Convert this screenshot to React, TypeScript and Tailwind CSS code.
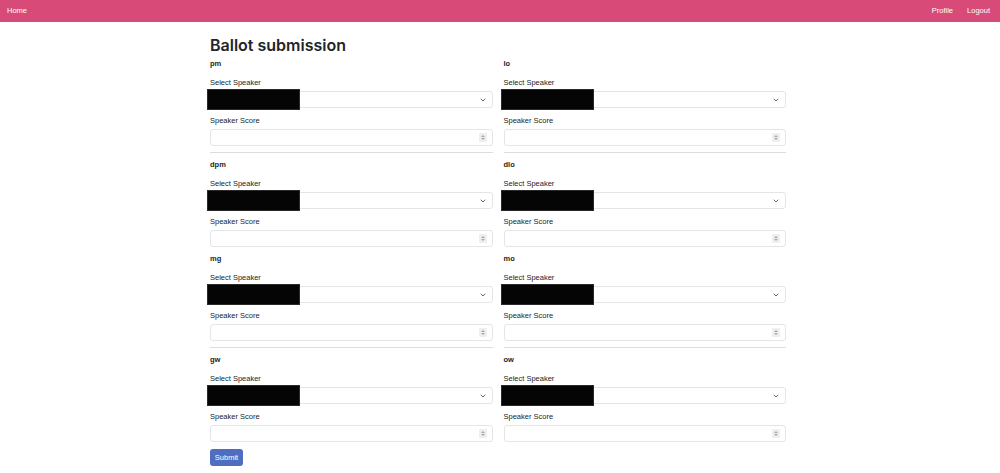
import React from 'react';

const rows: [string, string][] = [
  ['pm', 'lo'],
  ['dpm', 'dlo'],
  ['mg', 'mo'],
  ['gw', 'ow'],
];

// rows followed by a divider line
const divided = ['pm', 'lo', 'mg', 'mo'];

function Chevron() {
  return (
    <svg width="6" height="4" viewBox="0 0 6 4" fill="none">
      <path d="M1 1 3 3 5 1" stroke="#666" strokeWidth="1" strokeLinecap="round" strokeLinejoin="round" />
    </svg>
  );
}

function Spinner() {
  return (
    <div className="flex h-[9px] w-[8px] flex-col items-center justify-center gap-[1px] rounded-[1px] bg-[#efefef]">
      <svg width="4" height="2" viewBox="0 0 4 2">
        <path d="M0 2 2 0 4 2Z" fill="#a8a8a8" />
      </svg>
      <svg width="4" height="2" viewBox="0 0 4 2">
        <path d="M0 0 2 2 4 0Z" fill="#a8a8a8" />
      </svg>
    </div>
  );
}

function SpeakerSection({ position }: { position: string }) {
  const hasDivider = divided.includes(position);
  return (
    <div className="flex flex-col">
      <div className="h-[12px] text-[7.5px] font-bold leading-[12px] text-[#212529]">{position}</div>
      <div className="mt-[7px] h-[12px] text-[7.5px] leading-[12px] text-[#212529]">Select Speaker</div>
      <div className="relative mt-[2px]">
        <div className="flex h-[17px] items-center justify-end rounded-[3px] border border-[#e3e5e8] bg-white pr-[6px]">
          <Chevron />
        </div>
        {/* redacted name */}
        <div className="absolute left-[-3px] top-[-2px] h-[21px] w-[93px] border border-[#2a2a2a] bg-[#050505]" />
      </div>
      <div className="mt-[7px] h-[12px] text-[7.5px] leading-[12px] text-[#212529]">Speaker Score</div>
      <div className="mt-[2px] flex h-[17px] items-center justify-end rounded-[3px] border border-[#e3e5e8] bg-white pr-[5px]">
        <Spinner />
      </div>
      {hasDivider && <div className="mt-[6px] h-px bg-[#dcdde0]" />}
    </div>
  );
}

export default function App() {
  return (
    <div className="min-h-[473px] bg-white" style={{ fontFamily: '"Liberation Sans", Arial, sans-serif' }}>
      <nav className="flex h-[22px] items-center justify-between bg-[#d84b78] px-[7px] text-[7.5px] text-white">
        <span>Home</span>
        <div className="flex items-center gap-[14px] pr-[3px]">
          <span>Profile</span>
          <span>Logout</span>
        </div>
      </nav>

      <div className="mx-auto w-[580px] pr-[4px]">
        <h1 className="mt-[10px] h-[26px] font-['Inter',sans-serif] text-[16px] font-semibold leading-[26px] text-[#212529]">
          Ballot submission
        </h1>
        <div className="grid grid-cols-2 gap-x-[11px] gap-y-[6px]">
          {rows.map(([left, right]) => (
            <React.Fragment key={left}>
              <SpeakerSection position={left} />
              <SpeakerSection position={right} />
            </React.Fragment>
          ))}
        </div>
        <button className="mt-[7px] h-[17px] w-[33px] rounded-[3px] bg-[#4f6ec0] text-[7.5px] text-white">
          Submit
        </button>
      </div>
    </div>
  );
}
